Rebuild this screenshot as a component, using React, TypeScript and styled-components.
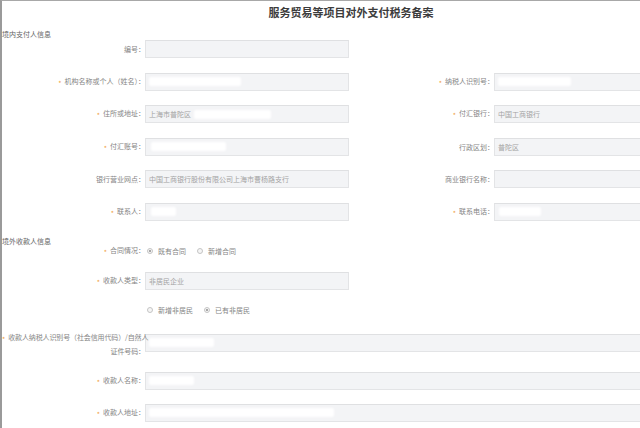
import React from "react";
import styled, { createGlobalStyle } from "styled-components";

const Global = createGlobalStyle`
  html, body { margin: 0; padding: 0; background: #fff; overflow: hidden; }
  body { font-family: "Noto Sans CJK SC", "Noto Sans", sans-serif; }
`;

const Page = styled.div`
  width: 698px;
  height: 428px;
  border-left: 2px solid #9a9a9a;
  border-top: 1px solid #a8a8a8;
  background: #fff;
`;

const Title = styled.h1`
  margin: 0;
  height: 22px;
  line-height: 22px;
  text-align: center;
  font-size: 11px;
  font-weight: 700;
  color: #3c3c3c;
`;

const SectionTitle = styled.div<{ $top: number }>`
  margin-top: ${(p) => p.$top}px;
  font-size: 7px;
  line-height: 8px;
  height: 8px;
  color: #666;
  white-space: nowrap;
`;

const Row = styled.div<{ $top: number; $h?: number }>`
  display: grid;
  grid-template-columns: 143px 204px 145px 204px;
  align-items: center;
  height: ${(p) => p.$h ?? 18}px;
  margin-top: ${(p) => p.$top}px;
`;

const Label = styled.div<{ $multi?: boolean }>`
  text-align: right;
  font-size: 7px;
  line-height: ${(p) => (p.$multi ? 12 : 8)}px;
  color: #858585;
  white-space: nowrap;
  align-self: ${(p) => (p.$multi ? "start" : "center")};
  padding-top: ${(p) => (p.$multi ? 2 : 0)}px;
  letter-spacing: ${(p) => (p.$multi ? "-0.12px" : "normal")};
  position: relative;
  z-index: 1;
  direction: ${(p) => (p.$multi ? "rtl" : "ltr")};
`;

const LabelLine = styled.span`
  direction: ltr;
  unicode-bidi: isolate;
  display: block;
`;

const Req = styled.span`
  color: #f0a040;
  margin-right: 3px;
  display: inline-block;
  vertical-align: -2px;
`;

const Field = styled.div<{ $span?: number }>`
  grid-column: span ${(p) => p.$span ?? 1};
  height: 18px;
  box-sizing: border-box;
  border: 1px solid #e3e4e6;
  border-top-color: #dfe0e2;
  background: #f3f4f6;
  display: flex;
  align-items: center;
  padding-left: 3px;
  font-size: 7px;
  color: #a3a3a3;
  white-space: nowrap;
  overflow: hidden;
`;

const Redact = styled.span<{ $w: number; $ml?: number }>`
  display: inline-block;
  width: ${(p) => p.$w}px;
  height: 9px;
  margin-left: ${(p) => p.$ml ?? 0}px;
  background: #fff;
  border-radius: 2px;
  filter: blur(0.8px);
`;

const RadioGroup = styled.div`
  grid-column: span 3;
  display: flex;
  align-items: center;
  padding-left: 2px;
`;

const Option = styled.label`
  display: flex;
  align-items: center;
  gap: 5px;
  margin-right: 11px;
  font-size: 7px;
  line-height: 8px;
  color: #858585;
`;

const Dot = styled.span<{ $on?: boolean }>`
  width: 6px;
  height: 6px;
  box-sizing: border-box;
  border-radius: 50%;
  border: 1px solid #c4c4c4;
  background: #f6f6f6;
  display: flex;
  align-items: center;
  justify-content: center;
  &::after {
    content: "";
    width: 2px;
    height: 2px;
    border-radius: 50%;
    background: ${(p) => (p.$on ? "#8d8d8d" : "transparent")};
  }
`;

const Empty = styled.div``;

const R = () => <Req>*</Req>;

export default function App() {
  return (
    <>
      <Global />
      <Page>
        <Title>服务贸易等项目对外支付税务备案</Title>

        <SectionTitle $top={7}>境内支付人信息</SectionTitle>
        <Row $top={2}>
          <Label>编号：</Label>
          <Field />
        </Row>
        <Row $top={14.6}>
          <Label><R />机构名称或个人（姓名）：</Label>
          <Field><Redact $w={92} /></Field>
          <Label><R />纳税人识别号：</Label>
          <Field><Redact $w={73} /></Field>
        </Row>
        <Row $top={14.6}>
          <Label><R />住所或地址：</Label>
          <Field>上海市普陀区<Redact $w={77} $ml={3} /></Field>
          <Label><R />付汇银行：</Label>
          <Field>中国工商银行</Field>
        </Row>
        <Row $top={14.6}>
          <Label><R />付汇账号：</Label>
          <Field><Redact $w={75} $ml={2} /></Field>
          <Label>行政区划：</Label>
          <Field>普陀区</Field>
        </Row>
        <Row $top={14.6}>
          <Label>银行营业网点：</Label>
          <Field>中国工商银行股份有限公司上海市曹杨路支行</Field>
          <Label>商业银行名称：</Label>
          <Field />
        </Row>
        <Row $top={14.6}>
          <Label><R />联系人：</Label>
          <Field><Redact $w={25} $ml={2} /></Field>
          <Label><R />联系电话：</Label>
          <Field><Redact $w={42} $ml={1} /></Field>
        </Row>

        <SectionTitle $top={16}>境外收款人信息</SectionTitle>
        <Row $top={1} $h={10}>
          <Label><R />合同情况：</Label>
          <RadioGroup>
            <Option><Dot $on />既有合同</Option>
            <Option><Dot />新增合同</Option>
          </RadioGroup>
        </Row>
        <Row $top={16}>
          <Label><R />收款人类型：</Label>
          <Field>非居民企业</Field>
        </Row>
        <Row $top={15} $h={10}>
          <Empty />
          <RadioGroup>
            <Option><Dot />新增非居民</Option>
            <Option><Dot $on />已有非居民</Option>
          </RadioGroup>
        </Row>
        <Row $top={14}>
          <Label $multi>
            <LabelLine><R />收款人纳税人识别号（社会信用代码）/自然人</LabelLine>
            <LabelLine>证件号码：</LabelLine>
          </Label>
          <Field $span={3}><Redact $w={65} /></Field>
        </Row>
        <Row $top={25}>
          <Label><R />收款人名称：</Label>
          <Field $span={3}><Redact $w={45} /></Field>
        </Row>
        <Row $top={14}>
          <Label><R />收款人地址：</Label>
          <Field $span={3}><Redact $w={185} /></Field>
        </Row>
      </Page>
    </>
  );
}
